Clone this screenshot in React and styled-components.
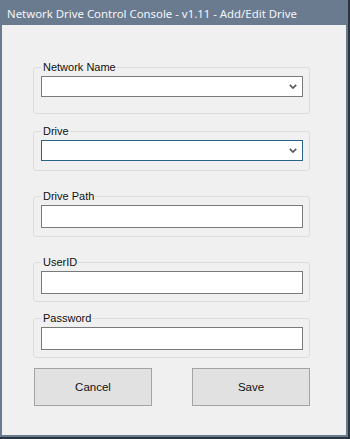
import React from "react";
import styled, { createGlobalStyle } from "styled-components";

const Global = createGlobalStyle`
  html, body { margin: 0; padding: 0; }
  body {
    background: #2b3541;
    width: 350px;
    height: 439px;
    overflow: hidden;
  }
  * { box-sizing: border-box; }
`;

const Window = styled.div`
  width: 348px;
  height: 437px;
  background: #6a7b90;
  display: flex;
  flex-direction: column;
  padding: 0 2px 2px 2px;
`;

const TitleBar = styled.div`
  height: 25px;
  flex: none;
  display: flex;
  align-items: center;
  padding-left: 5px;
  padding-top: 1px;
  color: #f3f5f8;
  font-family: "Noto Sans", "Open Sans", sans-serif;
  font-size: 11.4px;
  white-space: nowrap;
`;

const Client = styled.div`
  flex: 1;
  background: #f0f0f0;
  display: flex;
  flex-direction: column;
  padding: 36px 0 0 31px;
  font-family: "Liberation Sans", Arial, sans-serif;
  font-size: 11px;
  color: #000;
`;

const Group = styled.fieldset`
  width: 277px;
  margin: ${(p) => p.$top}px 0 0 0;
  padding: 2px 6px ${(p) => p.$bottom}px 7px;
  border: 1px solid #dcdcdc;
  border-radius: 3px;
  min-width: 0;
`;

const Legend = styled.legend`
  padding: 0 1px 0 2px;
  margin-left: 0;
  line-height: 13px;
  font-size: 11px;
  height: 13px;
  color: #111;
`;

const Field = styled.div`
  height: ${(p) => (p.$combo ? 21 : 23)}px;
  width: 262px;
  background: #fff;
  border: 1px solid ${(p) => (p.$focused ? "#2a6288" : "#7a7a7a")};
  display: flex;
  align-items: center;
  justify-content: flex-end;
  padding-right: 5px;
`;

const Chevron = styled.svg`
  width: 8px;
  height: 5px;
  display: block;
`;

const ButtonRow = styled.div`
  width: 276px;
  margin: 10px 0 0 1px;
  display: flex;
  justify-content: space-between;
`;

const Button = styled.button`
  width: 118px;
  height: 38px;
  background: #e1e1e1;
  border: 1px solid #a3a3a3;
  border-radius: 0;
  font-family: "Liberation Sans", Arial, sans-serif;
  font-size: 11.5px;
  color: #111;
  padding: 0;
`;

const Arrow = () => (
  <Chevron viewBox="0 0 8 5">
    <path d="M0.8 0.8 L4 4 L7.2 0.8" fill="none" stroke="#5a5a5a" strokeWidth="1.7" />
  </Chevron>
);

const groups = [
  { label: "Network Name", combo: true, top: 0, bottom: 16 },
  { label: "Drive", combo: true, focused: true, top: 11, bottom: 9 },
  { label: "Drive Path", top: 19, bottom: 8 },
  { label: "UserID", top: 19, bottom: 7 },
  { label: "Password", top: 10, bottom: 7 },
];

export default function App() {
  return (
    <>
      <Global />
      <Window>
        <TitleBar>Network Drive Control Console - v1.11 - Add/Edit Drive</TitleBar>
        <Client>
          {groups.map((g) => (
            <Group key={g.label} $top={g.top} $bottom={g.bottom}>
              <Legend>{g.label}</Legend>
              <Field $combo={g.combo} $focused={g.focused}>
                {g.combo && <Arrow />}
              </Field>
            </Group>
          ))}
          <ButtonRow>
            <Button>Cancel</Button>
            <Button>Save</Button>
          </ButtonRow>
        </Client>
      </Window>
    </>
  );
}
